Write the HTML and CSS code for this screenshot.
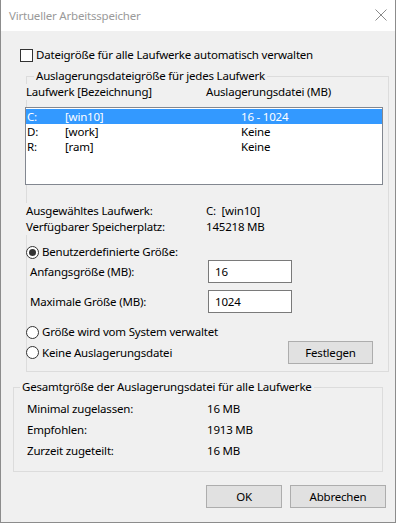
FILE: index.html
```html
<!DOCTYPE html>
<html lang="de">
<head>
    <meta charset="UTF-8">
    <title>Virtueller Arbeitsspeicher</title>
    <link rel="stylesheet" href="styles.css">
</head>
<body>
    <div class="window">
        <div class="titlebar">
            <span class="title">Virtueller Arbeitsspeicher</span>
            <svg class="close" width="12" height="12" viewBox="0 0 12 12">
                <path d="M0.5 0.5 L11.5 11.5 M11.5 0.5 L0.5 11.5" stroke="#8a8a8a" stroke-width="1" fill="none"/>
            </svg>
        </div>
        <div class="client">
            <div class="check-row">
                <span class="checkbox"></span>
                <span>Dateigröße für alle Laufwerke automatisch verwalten</span>
            </div>

            <div class="group group-drives">
                <div class="legend">Auslagerungsdateigröße für jedes Laufwerk</div>
                <div class="list-head">
                    <span class="head-drive">Laufwerk [Bezeichnung]</span>
                    <span class="head-size">Auslagerungsdatei (MB)</span>
                </div>
                <div class="listbox">
                    <div class="list-row selected"><span>C:</span><span>[win10]</span><span>16 - 1024</span></div>
                    <div class="list-row"><span>D:</span><span>[work]</span><span>Keine</span></div>
                    <div class="list-row"><span>R:</span><span>[ram]</span><span>Keine</span></div>
                </div>

                <div class="info">
                    <span>Ausgewähltes Laufwerk:</span><span class="value">C:  [win10]</span>
                    <span>Verfügbarer Speicherplatz:</span><span class="value">145218 MB</span>
                </div>

                <div class="radio-row first">
                    <span class="radio checked"></span>
                    <span>Benutzerdefinierte Größe:</span>
                </div>
                <div class="field-row">
                    <span class="field-label">Anfangsgröße (MB):</span>
                    <span class="textbox">16</span>
                </div>
                <div class="field-row second">
                    <span class="field-label">Maximale Größe (MB):</span>
                    <span class="textbox">1024</span>
                </div>
                <div class="radio-row system">
                    <span class="radio"></span>
                    <span>Größe wird vom System verwaltet</span>
                </div>
                <div class="radio-row none">
                    <span class="radio"></span>
                    <span>Keine Auslagerungsdatei</span>
                    <button class="btn btn-set">Festlegen</button>
                </div>
            </div>

            <div class="group group-total">
                <div class="legend">Gesamtgröße der Auslagerungsdatei für alle Laufwerke</div>
                <div class="totals">
                    <span>Minimal zugelassen:</span><span>16 MB</span>
                    <span>Empfohlen:</span><span>1913 MB</span>
                    <span>Zurzeit zugeteilt:</span><span>16 MB</span>
                </div>
            </div>

            <div class="actions">
                <button class="btn btn-ok">OK</button>
                <button class="btn btn-cancel">Abbrechen</button>
            </div>
        </div>
    </div>
</body>
</html>
```

FILE: styles.css
```css
body {
    margin: 0;
    font-family: "Noto Sans", "Open Sans", sans-serif;
    font-size: 11.5px;
    letter-spacing: -0.2px;
    line-height: 16px;
    color: #000;
    background: #fff;
}
.window {
    width: 396px;
    height: 523px;
    box-sizing: border-box;
    border: 1px solid #8c8c8c;
    border-top: none;
    background: #f0f0f0;
    overflow: hidden;
}
.titlebar {
    height: 31px;
    background: #fff;
    display: flex;
    align-items: center;
    justify-content: space-between;
    padding: 0 8px 0 8px;
}
.title {
    color: #9a9a9a;
}
.close {
    margin-top: -1px;
}
.client {
    padding-top: 16px;
}

/* checkbox line */
.check-row {
    display: flex;
    align-items: center;
    height: 16px;
    margin-left: 19px;
}
.checkbox {
    width: 13px;
    height: 13px;
    box-sizing: border-box;
    border: 1px solid #333;
    background: #fff;
    margin-right: 3px;
}

/* group boxes */
.group {
    border: 1px solid #dcdcdc;
}
.legend {
    display: table;
    margin-top: -9px;
    padding: 0 2px;
    background: #f0f0f0;
}
.group-drives {
    margin: 13px 0 0 25px;
    width: 363px;
    box-sizing: border-box;
    padding-bottom: 7px;
}
.group-drives .legend {
    margin-left: 7px;
}
.list-head {
    display: flex;
    margin-left: -1px;
}
.list-head span {
    background: #f0f0f0;
}
.head-drive {
    width: 180px;
}
.listbox {
    margin: 7px 0 0 -2px;
    width: 358px;
    height: 78px;
    box-sizing: border-box;
    border: 1px solid #828790;
    background: #fff;
    padding-top: 1px;
}
.list-row {
    display: grid;
    grid-template-columns: 38px 176px 1fr;
    height: 15px;
    line-height: 15px;
    padding-left: 1px;
}
.list-row.selected {
    background: #3399ff;
    color: #fff;
}
.info {
    display: grid;
    grid-template-columns: 180px 1fr;
    margin: 18px 0 0 -1px;
}
.info span {
    background: #f0f0f0;
}
.value {
    white-space: pre;
}
.radio-row {
    display: flex;
    align-items: center;
    height: 16px;
    margin-left: -1px;
}
.radio-row span {
    background: #f0f0f0;
}
.radio-row.first {
    margin-top: 9px;
}
.radio-row.system {
    margin-top: 11px;
}
.radio-row.none {
    margin-top: 1px;
    height: 23px;
}
.radio {
    width: 13px;
    height: 13px;
    box-sizing: border-box;
    border: 1px solid #333;
    border-radius: 50%;
    background: #fff !important;
    margin-right: 3px;
    display: flex;
    align-items: center;
    justify-content: center;
}
.radio.checked::after {
    content: "";
    width: 7px;
    height: 7px;
    border-radius: 50%;
    background: #333;
}
.field-row {
    display: flex;
    align-items: center;
    height: 23px;
    padding-left: 3px;
}
.field-row.second {
    margin-top: 7px;
}
.field-label {
    width: 178px;
}
.textbox {
    width: 84px;
    height: 23px;
    box-sizing: border-box;
    border: 1px solid #7a7a7a;
    background: #fff;
    padding: 3px 0 0 6px;
}

/* buttons */
.btn {
    font-family: inherit;
    font-size: 11.5px;
    letter-spacing: -0.2px;
    color: #000;
    height: 23px;
    box-sizing: border-box;
    border: 1px solid #adadad;
    background: #e1e1e1;
    padding: 0;
    margin: 0;
}
.btn-set {
    width: 85px;
    margin-left: auto;
    margin-right: 15px;
}

.group-total {
    margin: 15px 0 0 12px;
    width: 370px;
    box-sizing: border-box;
    padding-bottom: 12px;
}
.group-total .legend {
    margin-left: 6px;
}
.totals {
    display: grid;
    grid-template-columns: 180px 1fr;
    row-gap: 5px;
    margin: 6px 0 0 13px;
}
.actions {
    display: flex;
    justify-content: flex-end;
    gap: 8px;
    margin: 13px 9px 0 0;
}
.btn-ok {
    width: 76px;
}
.btn-cancel {
    width: 96px;
}
```
